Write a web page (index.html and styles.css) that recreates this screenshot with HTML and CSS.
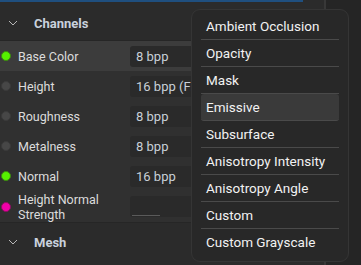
FILE: index.html
```html
<!DOCTYPE html>
<html lang="en">
<head>
    <meta charset="UTF-8">
    <title>Channels</title>
    <link rel="stylesheet" href="styles.css">
</head>
<body>
    <div class="layout">
        <div class="panel">
            <div class="topbar"></div>
            <div class="section-head">
                <svg class="chev" width="34" height="8" viewBox="0 0 34 8"><polyline points="9,2 13,6 17,2" fill="none" stroke="#b8b8b8" stroke-width="1"/></svg>
                <span class="section-title">Channels</span>
            </div>
            <div class="rows">
                <div class="row active">
                    <span class="dot on"></span>
                    <span class="label">Base Color</span>
                    <span class="field">8 bpp</span>
                </div>
                <div class="row">
                    <span class="dot"></span>
                    <span class="label">Height</span>
                    <span class="field">16 bpp (FP)</span>
                </div>
                <div class="row">
                    <span class="dot"></span>
                    <span class="label">Roughness</span>
                    <span class="field">8 bpp</span>
                </div>
                <div class="row">
                    <span class="dot"></span>
                    <span class="label">Metalness</span>
                    <span class="field">8 bpp</span>
                </div>
                <div class="row">
                    <span class="dot on"></span>
                    <span class="label">Normal</span>
                    <span class="field">16 bpp</span>
                </div>
                <div class="row tall">
                    <span class="dot pink"></span>
                    <span class="label">Height Normal<br>Strength</span>
                    <span class="field slider"><span class="track"></span></span>
                </div>
            </div>
            <div class="section-head mesh">
                <svg class="chev" width="34" height="8" viewBox="0 0 34 8"><polyline points="9,2 13,6 17,2" fill="none" stroke="#b8b8b8" stroke-width="1"/></svg>
                <span class="section-title">Mesh</span>
            </div>
        </div>
        <div class="divider"></div>
        <div class="side"></div>
    </div>

    <ul class="menu">
        <li>Ambient Occlusion</li>
        <li>Opacity</li>
        <li>Mask</li>
        <li class="hover">Emissive</li>
        <li>Subsurface</li>
        <li>Anisotropy Intensity</li>
        <li>Anisotropy Angle</li>
        <li>Custom</li>
        <li>Custom Grayscale</li>
    </ul>
</body>
</html>
```
FILE: styles.css
```css
body {
    margin: 0;
    background-color: #252525;
    font-family: Roboto, "Liberation Sans", sans-serif;
    font-size: 12.5px;
    color: #dcdcdc;
    width: 361px;
    height: 265px;
    overflow: hidden;
    position: relative;
}

.layout {
    display: flex;
    height: 265px;
}

.panel {
    width: 324px;
    background-color: #2b2b2b;
    display: flex;
    flex-direction: column;
}

.topbar {
    height: 2px;
    width: 303px;
    background-color: #1f4f7f;
    margin-bottom: 6px;
}

.divider {
    width: 2px;
    background-color: #383838;
}

.side {
    flex: 1;
}

.section-head {
    height: 32px;
    display: flex;
    align-items: center;
    border-bottom: 1px solid #262626;
}

.chev {
    flex-shrink: 0;
    margin-top: -2px;
}

.section-title {
    font-weight: bold;
    font-size: 13px;
    color: #c9d1dc;
    margin-top: -2px;
}

.rows {
    background-color: #303030;
    border-bottom: 1px solid #262626;
}

.row {
    height: 30px;
    display: flex;
    align-items: center;
}

.row.active {
    background-color: #3c3c3c;
}

.row.tall {
    height: 31px;
}

.dot {
    width: 8px;
    height: 8px;
    border-radius: 50%;
    background-color: #474747;
    border: 1px solid #3a3a3a;
    margin: 0 7px 0 1px;
    flex-shrink: 0;
}

.dot.on {
    background-color: #56f000;
    border-color: #3c8a10;
}

.dot.pink {
    background-color: #f000a8;
    border-color: #8a1060;
}

.label {
    width: 112px;
    line-height: 15px;
}

.field {
    width: 190px;
    height: 21px;
    line-height: 21px;
    padding-left: 6px;
    background-color: #2a2a2a;
    border-radius: 3px;
    color: #c8d0d8;
    font-size: 13px;
    box-sizing: border-box;
}

.field.slider {
    position: relative;
}

.track {
    position: absolute;
    left: 2px;
    bottom: 1px;
    width: 28px;
    height: 1px;
    background-color: #5a5a5a;
}

.mesh {
    height: 36px;
    border-bottom: none;
}

.mesh .chev,
.mesh .section-title {
    margin-top: 2px;
}

.menu {
    position: absolute;
    left: 191px;
    top: 9px;
    width: 158px;
    height: 253px;
    margin: 0;
    padding: 3px 9px 0;
    box-sizing: border-box;
    list-style: none;
    background-color: #282828;
    border: 1px solid #353535;
    border-radius: 9px;
}

.menu li {
    height: 26px;
    line-height: 26px;
    padding-left: 5px;
    border-bottom: 1px solid #4a4a4a;
    color: #f2f2f2;
    font-size: 13.5px;
}

.menu li:last-child {
    border-bottom: none;
}

.menu li.hover {
    background-color: #3a3a3a;
    border-radius: 3px;
}
```
